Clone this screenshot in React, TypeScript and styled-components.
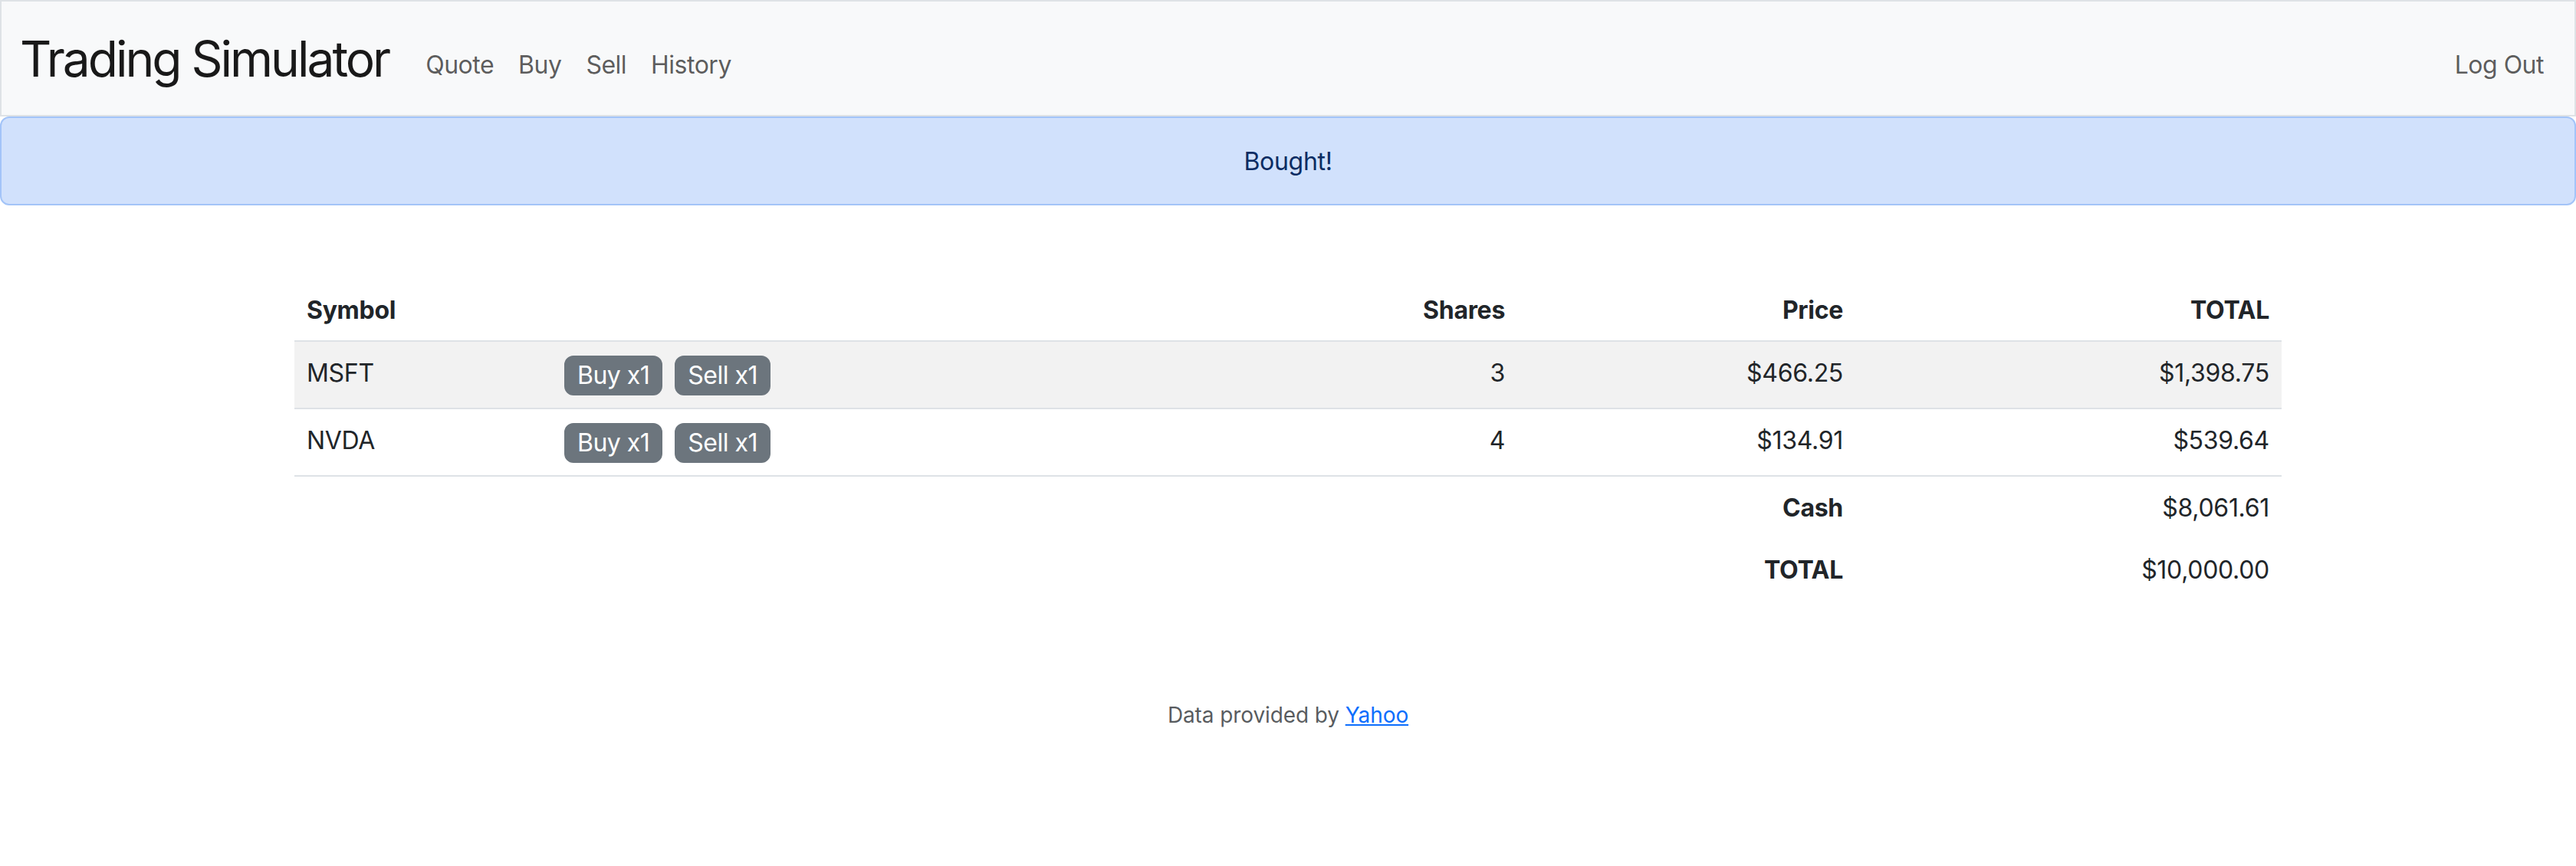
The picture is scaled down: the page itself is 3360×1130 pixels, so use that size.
import React from "react";
import styled, { createGlobalStyle } from "styled-components";

const GlobalStyle = createGlobalStyle`
  * { box-sizing: border-box; }
  html, body { margin: 0; padding: 0; background: #ffffff; }
  body {
    font-family: Inter, "Noto Sans", "Liberation Sans", sans-serif;
    font-size: 32px;
    line-height: 1.5;
    color: #212529;
  }
`;

const Nav = styled.nav`
  display: flex;
  align-items: center;
  padding: 16px 24px;
  background: #f8f9fa;
  border: 2px solid #dee2e6;
`;

const Brand = styled.a`
  font-size: 64px;
  line-height: 96px;
  padding: 11px 0 9px;
  margin-right: 32px;
  color: rgba(0, 0, 0, 0.9);
  text-decoration: none;
  letter-spacing: -3px;
  white-space: nowrap;
`;

const NavList = styled.ul<{ $end?: boolean }>`
  display: flex;
  list-style: none;
  padding: 0;
  margin: 16px 0 0 ${(p) => (p.$end ? "auto" : "0")};
`;

const NavLink = styled.a`
  display: block;
  padding: 17px 16px 15px;
  font-size: 32px;
  line-height: 48px;
  color: rgba(0, 0, 0, 0.65);
  text-decoration: none;
  letter-spacing: -0.5px;
`;

const Alert = styled.div`
  background: #d1e1fc;
  border: 2px solid #a3c4f8;
  border-radius: 12px;
  color: #0b2c63;
  padding: 33px 32px 31px;
  text-align: center;
  letter-spacing: -0.3px;
`;

const Main = styled.main`
  max-width: 2640px;
  margin: 0 auto;
  padding: 96px 24px;
`;

const Table = styled.table`
  width: 100%;
  border-collapse: collapse;
  table-layout: fixed;
  margin-bottom: 32px;
  letter-spacing: -0.3px;
`;

const HeadCell = styled.th<{ $align?: "left" | "right" }>`
  padding: 17px 16px 15px;
  text-align: ${(p) => p.$align ?? "left"};
  font-weight: 700;
  vertical-align: top;
  border-bottom: 2px solid #dee2e6;
`;

const BodyRow = styled.tr<{ $striped?: boolean }>`
  background: ${(p) => (p.$striped ? "#f2f2f2" : "transparent")};
  border-bottom: 2px solid #dee2e6;
`;

const Cell = styled.td<{ $align?: "left" | "right"; $bold?: boolean }>`
  padding: 17px 16px 16px;
  text-align: ${(p) => p.$align ?? "left"};
  font-weight: ${(p) => (p.$bold ? 700 : 400)};
  vertical-align: top;
`;

const ButtonGroup = styled.div`
  display: flex;
  gap: 16px;
  margin-top: 1px;
`;

const ActionButton = styled.button`
  font-family: inherit;
  font-size: 32px;
  line-height: 48px;
  height: 52px;
  padding: 0 15px;
  border: 2px solid #6c757d;
  border-radius: 12px;
  background: #6c757d;
  color: #ffffff;
  letter-spacing: -0.5px;
  cursor: pointer;
`;

const Footer = styled.footer`
  font-size: 28px;
  line-height: 1.5;
  text-align: center;
  color: rgba(33, 37, 41, 0.75);
  margin-bottom: 96px;
  letter-spacing: -0.1px;
`;

const FooterLink = styled.a`
  color: #0d6efd;
  text-decoration: underline;
`;

type Holding = { symbol: string; shares: number; price: string; total: string };

const holdings: Holding[] = [
  { symbol: "MSFT", shares: 3, price: "$466.25", total: "$1,398.75" },
  { symbol: "NVDA", shares: 4, price: "$134.91", total: "$539.64" },
];

export default function App() {
  return (
    <>
      <GlobalStyle />
      <Nav>
        <Brand href="#">Trading Simulator</Brand>
        <NavList>
          <li><NavLink href="#">Quote</NavLink></li>
          <li><NavLink href="#">Buy</NavLink></li>
          <li><NavLink href="#">Sell</NavLink></li>
          <li><NavLink href="#">History</NavLink></li>
        </NavList>
        <NavList $end>
          <li><NavLink href="#">Log Out</NavLink></li>
        </NavList>
      </Nav>
      <Alert>Bought!</Alert>
      <Main>
        <Table>
          <colgroup>
            <col style={{ width: 336 }} />
            <col style={{ width: 780 }} />
            <col style={{ width: 479 }} />
            <col style={{ width: 441 }} />
            <col style={{ width: 556 }} />
          </colgroup>
          <thead>
            <tr>
              <HeadCell>Symbol</HeadCell>
              <HeadCell />
              <HeadCell $align="right">Shares</HeadCell>
              <HeadCell $align="right">Price</HeadCell>
              <HeadCell $align="right">TOTAL</HeadCell>
            </tr>
          </thead>
          <tbody>
            {holdings.map((h, i) => (
              <BodyRow key={h.symbol} $striped={i % 2 === 0}>
                <Cell>{h.symbol}</Cell>
                <Cell>
                  <ButtonGroup>
                    <ActionButton>Buy x1</ActionButton>
                    <ActionButton>Sell x1</ActionButton>
                  </ButtonGroup>
                </Cell>
                <Cell $align="right">{h.shares}</Cell>
                <Cell $align="right">{h.price}</Cell>
                <Cell $align="right">{h.total}</Cell>
              </BodyRow>
            ))}
          </tbody>
          <tfoot>
            <tr>
              <Cell colSpan={3} />
              <Cell $align="right" $bold>Cash</Cell>
              <Cell $align="right">$8,061.61</Cell>
            </tr>
            <tr>
              <Cell colSpan={3} />
              <Cell $align="right" $bold>TOTAL</Cell>
              <Cell $align="right">$10,000.00</Cell>
            </tr>
          </tfoot>
        </Table>
      </Main>
      <Footer>
        Data provided by <FooterLink href="#">Yahoo</FooterLink>
      </Footer>
    </>
  );
}
